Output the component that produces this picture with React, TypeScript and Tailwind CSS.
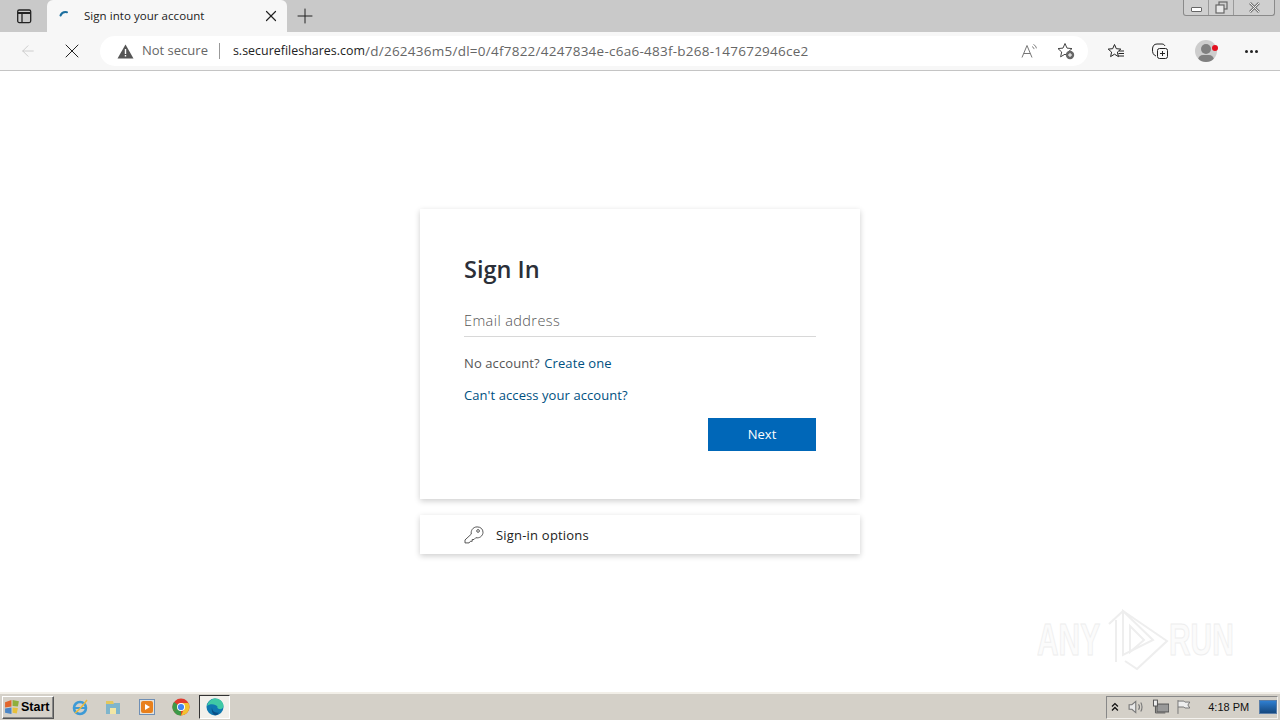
import { ArrowLeft, Plus, X } from "lucide-react";

const font = { fontFamily: '"Open Sans", "Noto Sans", sans-serif' };

function TabStrip() {
  return (
    <div className="relative flex h-[32px] shrink-0 items-end bg-[#c9c9c9]">
      <div className="flex h-[32px] w-[47px] items-center justify-center">
        <svg width="16" height="16" viewBox="0 0 16 16" fill="none" stroke="#222" strokeWidth="1.3">
          <rect x="1.7" y="2" width="13" height="12.6" rx="1.5" />
          <path d="M2 5h12.5" strokeWidth="2" />
          <path d="M6 5v9" />
        </svg>
      </div>
      <div className="flex h-[32px] w-[240px] items-center rounded-t-[6px] bg-[#f7f7f7] pl-[11px] pr-[7px]">
        <svg width="16" height="16" viewBox="0 0 16 16" fill="none">
          <path d="M2.5 7.5C3.6 4.8 6 3.6 9 4.2" stroke="#1d6f9f" strokeWidth="2" strokeLinecap="round" />
        </svg>
        <span className="ml-[10px] flex-1 text-[11.5px] tracking-[0.05px] text-[#222]">Sign into your account</span>
        <X size={18} strokeWidth={1.6} className="text-[#222]" />
      </div>
      <div className="flex h-[32px] w-[36px] items-center justify-center">
        <Plus size={24} strokeWidth={1} className="text-[#222]" />
      </div>
      <div className="absolute right-[5px] top-0 flex h-[16px] w-[92px] rounded-b-[3px] border border-t-0 border-[#8a8a8a] bg-[#cfcfcf]">
        <div className="flex w-[25px] items-center justify-center border-r border-[#9a9a9a]">
          <div className="mt-[3px] h-[5px] w-[11px] rounded-[1px] border border-[#666] bg-white" />
        </div>
        <div className="flex w-[25px] items-center justify-center border-r border-[#9a9a9a]">
          <svg width="13" height="13" viewBox="0 0 13 13" fill="none" stroke="#666" strokeWidth="1.2">
            <rect x="4" y="1" width="8" height="7" fill="#cfcfcf" />
            <rect x="1" y="4" width="8" height="8" fill="#e8e8e8" />
          </svg>
        </div>
        <div className="flex flex-1 items-center justify-center">
          <svg width="13" height="11" viewBox="0 0 13 11" fill="none">
            <path d="M2 1l9 9M11 1l-9 9" stroke="#777" strokeWidth="2.6" />
            <path d="M2 1l9 9M11 1l-9 9" stroke="#eee" strokeWidth="1" />
          </svg>
        </div>
      </div>
    </div>
  );
}

function Toolbar() {
  return (
    <div className="flex h-[39px] shrink-0 items-center border-b border-[#c4c4c4] bg-[#f7f7f7]">
      <div className="flex w-[100px] shrink-0 items-center pl-[19px]">
        <ArrowLeft size={18} strokeWidth={1.2} className="text-[#c8c8c8]" />
        <X size={24} strokeWidth={1} className="ml-[23px] text-[#222]" />
      </div>
      <div className="flex h-[30px] w-[988px] shrink-0 items-center rounded-full bg-white pl-[17px] pr-[13px]">
        <svg width="17" height="15" viewBox="0 0 17 15">
          <path d="M8.5 0.5L16.5 14.5H0.5Z" fill="#555" />
          <path d="M7.8 5h1.4v5H7.8zM7.8 11h1.4v1.5H7.8z" fill="#fff" />
        </svg>
        <span className="ml-[8px] text-[13px] text-[#666]">Not secure</span>
        <div className="ml-[11px] h-[16px] w-px bg-[#999]" />
        <span className="ml-[13px] text-[12.4px] tracking-[0.03px] text-[#222]">s.securefileshares.com</span>
        <span className="flex-1 text-[13.5px] tracking-[0.25px] text-[#666]">/d/262436m5/dl=0/4f7822/4247834e-c6a6-483f-b268-147672946ce2</span>
        <svg width="18" height="16" viewBox="0 0 18 16" fill="none" stroke="#777" strokeWidth="1">
          <path d="M1 14.5L6 2.5l5 12M2.8 10.5h6.4" />
          <path d="M11 3.5c1.2.6 1.8 1.5 2 2.6M12.5 1.5c1.6.8 2.6 2.2 2.9 3.8" />
        </svg>
        <svg className="ml-[18px]" width="18" height="18" viewBox="0 0 18 18" fill="none">
          <path d="M8 1.5l2 4.6 5 .5-3.7 3.3 1.1 4.8L8 12.2 3.6 14.8l1.1-4.8L1 6.6l5-.5z" stroke="#444" strokeWidth="1" strokeLinejoin="round" />
          <circle cx="13" cy="13" r="4.2" fill="#666" />
          <path d="M11 13h4M13 11v4" stroke="#fff" strokeWidth="1" />
        </svg>
      </div>
      <div className="ml-[19px] flex items-center">
        <svg width="18" height="17" viewBox="0 0 18 17" fill="none" stroke="#222" strokeWidth="1">
          <path d="M7.5 1.5l1.8 4.2 4.5.4-3.4 3 1 4.5-3.9-2.4-3.9 2.4 1-4.5-3.4-3 4.5-.4z" strokeLinejoin="round" />
          <path d="M12 8h5M11.5 10.5h5.5M11 13h6" />
        </svg>
        <svg className="ml-[26px]" width="18" height="18" viewBox="0 0 18 18" fill="none" stroke="#222" strokeWidth="1">
          <path d="M5 14C2.5 13 1.2 11 1.5 7c.2-3 1.5-5 4.5-5h5c1.4 0 2.5.8 3 2" />
          <rect x="6.5" y="6.5" width="10" height="10" rx="2" fill="#f7f7f7" />
          <path d="M11.5 9v5M9 11.5h5" />
        </svg>
        <div className="relative ml-[26px] h-[22px] w-[22px] overflow-hidden rounded-full bg-[#cdcdcd]">
          <div className="absolute left-[6px] top-[4px] h-[10px] w-[10px] rounded-full bg-[#808080]" />
          <div className="absolute left-[3px] top-[15px] h-[10px] w-[16px] rounded-full bg-[#808080]" />
        </div>
        <div className="relative -ml-[5px] -mt-[6px] h-[6px] w-[6px] rounded-full bg-[#e3101f]" />
        <div className="ml-[27px] flex gap-[2px]">
          <div className="h-[3px] w-[3px] rounded-full bg-[#222]" />
          <div className="h-[3px] w-[3px] rounded-full bg-[#222]" />
          <div className="h-[3px] w-[3px] rounded-full bg-[#222]" />
        </div>
      </div>
    </div>
  );
}

function SignIn() {
  return (
    <div className="flex flex-1 flex-col items-center bg-white pt-[138px]">
      <div className="h-[290px] w-[440px] bg-white px-[44px] pt-[44px] shadow-[0_2px_6px_rgba(0,0,0,0.2)]">
        <h1 className="text-[23.5px] leading-[32px] font-semibold text-[#2b2f38]">Sign In</h1>
        <div className="mt-[19px] h-[33px] border-b border-[#d8d8d8] text-[14.5px] leading-[34px] font-light tracking-[0.4px] text-[#555]">Email address</div>
        <p className="mt-[16px] text-[13px] leading-[20px] tracking-[0.1px] text-[#555]">
          No account? <span className="ml-[1px] text-[#00507f]">Create one</span>
        </p>
        <p className="mt-[12px] text-[13px] leading-[20px] tracking-[0.08px] text-[#00507f]">Can't access your account?</p>
        <div className="mt-[13px] flex justify-end">
          <div className="flex h-[33px] w-[108px] items-center justify-center bg-[#0067b8] pt-[1px] text-[13px] text-white">Next</div>
        </div>
      </div>
      <div className="mt-[16px] flex h-[39px] w-[440px] items-center bg-white pl-[44px] shadow-[0_2px_6px_rgba(0,0,0,0.2)]">
        <svg width="20" height="18" viewBox="0 0 22 20" fill="none" stroke="#444" strokeWidth="1">
          <path d="M1 15.5L8 9c-.8-3.5 1.5-8 6.5-8C18.5 1 21 3.5 21 7c0 4-4 7-8 6l-2 2H9v2H7l-1.5 1.8H1z" strokeLinejoin="round" />
          <circle cx="15.5" cy="5.5" r="1.5" />
        </svg>
        <span className="ml-[12px] mt-[2px] text-[13px] tracking-[0.2px] text-[#222]">Sign-in options</span>
      </div>
    </div>
  );
}

function Taskbar() {
  return (
    <div className="flex h-[28px] shrink-0 items-center border-t-2 border-[#f2efe8] bg-[#d4d0c8]">
      <div className="ml-[2px] flex h-[23px] w-[52px] items-center gap-[1px] border border-[#555] border-l-white border-t-white pl-[1px] text-[12.5px] font-bold text-black shadow-[inset_-1px_-1px_0_#888]" style={{ fontFamily: '"Liberation Sans", sans-serif' }}>
        <svg width="16" height="16" viewBox="0 0 15 15">
          <path d="M1 3l6-2v6l-6 1z" fill="#e2662c" />
          <path d="M8 1l6 1-1 5-5-.5z" fill="#8fae3c" />
          <path d="M1 9l6-1v6l-6-1z" fill="#4c86c6" />
          <path d="M8 8l5 .5-1 5-4-.5z" fill="#e8c03a" />
        </svg>
        Start
      </div>
      <div className="ml-[17px] flex items-center">
        <div className="flex h-[18px] w-[18px] items-center justify-center">
          <svg width="18" height="18" viewBox="0 0 18 18" fill="none">
            <circle cx="9" cy="10" r="6" stroke="#3d9ad6" strokeWidth="2.6" />
            <path d="M3 10h12" stroke="#3d9ad6" strokeWidth="2" />
            <path d="M4 15C7 13 13 6 16 2" stroke="#e8b93a" strokeWidth="1.4" />
          </svg>
        </div>
        <svg className="ml-[16px]" width="16" height="16" viewBox="0 0 16 16">
          <path d="M1 4h14v11H1z" fill="#7fb5cc" />
          <path d="M1 2h7l1 3H1z" fill="#e3c75f" />
          <path d="M5 9h6v6H5z" fill="#f2e6a5" />
        </svg>
        <div className="ml-[18px] flex h-[16px] w-[16px] items-center justify-center border border-[#6f8fb5] bg-[#e6e2da]">
          <div className="flex h-[12px] w-[12px] items-center justify-center rounded-[2px] bg-[#e8801c]">
            <div className="h-0 w-0 border-y-[3px] border-l-[5px] border-y-transparent border-l-white" />
          </div>
        </div>
        <svg className="ml-[17px]" width="18" height="18" viewBox="0 0 18 18">
          <circle cx="9" cy="9" r="8.5" fill="#e23b2e" />
          <path d="M9 9L1.6 13.3A8.5 8.5 0 0 1 2 4z" fill="#3c9a48" />
          <path d="M9 9l0 8.5a8.5 8.5 0 0 1-7.4-4.2z" fill="#3c9a48" />
          <path d="M9 5h7.4A8.5 8.5 0 0 1 9 17.5L12 11z" fill="#f2c231" />
          <circle cx="9" cy="9" r="4" fill="#fff" />
          <circle cx="9" cy="9" r="3.1" fill="#4285f4" />
        </svg>
        <div className="ml-[9px] flex h-[24px] w-[31px] items-center justify-center border border-[#333] border-b-white border-r-white bg-[#f2f0eb]">
          <svg width="18" height="18" viewBox="0 0 18 18">
            <circle cx="9" cy="9" r="8.5" fill="#0f78b0" />
            <path d="M1 8C2 3 6 .5 9.5.5c4 0 8 3 8 7.5 0 2.5-2.5 3.5-4.5 3-1.5-.3-2-1.5-1.500-2.500C10 6 4 5 1 8z" fill="#3fc9a5" />
            <path d="M6 9.5c0 3.500 3 6 7 5l-2 2.500C7 18 5 13 6 9.500z" fill="#0a4f86" />
          </svg>
        </div>
      </div>
      <div className="ml-auto mr-[2px] flex h-[23px] w-[172px] items-center border border-[#f4f2ee] border-l-[#888] border-t-[#888]">
        <svg className="ml-[4px]" width="8" height="10" viewBox="0 0 8 10" fill="none" stroke="#111" strokeWidth="1.3">
          <path d="M1 4.5L4 1.5l3 3M1 8.5L4 5.5l3 3" />
        </svg>
        <svg className="ml-[9px]" width="18" height="18" viewBox="0 0 16 16" fill="none" stroke="#777" strokeWidth="1">
          <path d="M1 6h2.500L7 3v10L3.500 10H1z" fill="#e8e8e8" />
          <path d="M9.500 5.500c1 1.500 1 3.500 0 5M11.500 4c1.500 2.200 1.500 5.800 0 8" />
        </svg>
        <svg className="ml-[6px]" width="18" height="16" viewBox="0 0 18 16" fill="none" stroke="#555" strokeWidth="1">
          <rect x="5" y="5" width="12" height="8" fill="#999" />
          <rect x="1.5" y="1" width="4" height="6" fill="#eee" />
          <path d="M3.5 7v7h10" />
        </svg>
        <svg className="ml-[7px]" width="16" height="16" viewBox="0 0 16 16" fill="none" stroke="#777" strokeWidth="1">
          <path d="M2 1v14M2 2h6l1 1h5l-2 3 2 3H9L8 8H2" fill="#eee" />
        </svg>
        <span className="ml-[16px] whitespace-nowrap text-[11px] text-[#111]" style={{ fontFamily: '"Liberation Sans", sans-serif' }}>4:18 PM</span>
        <div className="ml-[10px] h-[14px] w-[18px] border border-[#5a7ea8] bg-gradient-to-b from-[#2f7fd1] to-[#16497f]" />
      </div>
    </div>
  );
}

export default function App() {
  return (
    <div className="relative flex h-[720px] w-[1280px] flex-col overflow-hidden bg-white" style={font}>
      <TabStrip />
      <Toolbar />
      <SignIn />
      <Taskbar />
      {/* watermark */}
      <div className="pointer-events-none absolute left-[1037px] top-[608px] flex h-[64px] items-center text-[44px] font-bold leading-[62px] text-[#fbfbfb] [-webkit-text-stroke:1px_#eeeeee]" style={{ fontFamily: '"Liberation Sans", sans-serif' }}>
        <span className="inline-block w-[66px] origin-left scale-x-[0.68] whitespace-nowrap">ANY</span>
        <svg width="66" height="64" viewBox="0 0 66 64" fill="none" stroke="#eeeeee" strokeWidth="2">
          <path d="M6 16L20 3l44 30-30 28-12-8" />
          <path d="M13 12v42M20 3v44l30-15z" />
          <path d="M27 18l14 14-14 12z" />
        </svg>
        <span className="inline-block w-[64px] origin-left scale-x-[0.68] whitespace-nowrap">RUN</span>
      </div>
    </div>
  );
}
